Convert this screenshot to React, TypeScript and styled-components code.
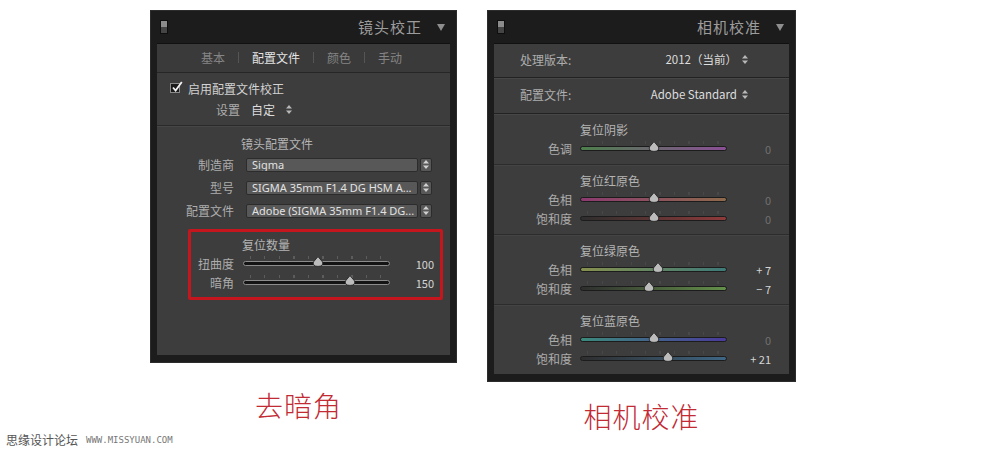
import React from "react"
import styled, { createGlobalStyle } from "styled-components"

// Global

const GlobalStyle = createGlobalStyle`
  html, body {
    margin: 0;
    padding: 0;
    background: #ffffff;
  }
  body {
    width: 1000px;
    height: 453px;
    overflow: hidden;
    position: relative;
    font-family: "Noto Sans CJK SC", "Noto Sans", sans-serif;
  }
`

// Page layout

const Page = styled.div`
  display: flex;
  align-items: flex-start;
  gap: 32px;
  padding: 11px 0 0 151px;
`

const Column = styled.div<{ $width: number }>`
  width: ${(p) => p.$width}px;
  display: flex;
  flex-direction: column;
  align-items: center;
`

const Caption = styled.div<{ $top: number; $shift: number }>`
  margin-top: ${(p) => p.$top}px;
  margin-right: ${(p) => p.$shift}px;
  font-family: "Noto Sans CJK SC", sans-serif;
  font-weight: 300;
  font-size: 28px;
  line-height: 1;
  letter-spacing: 1px;
  color: #c22a34;
`

const Watermark = styled.div`
  position: absolute;
  left: 6px;
  top: 431px;
  display: flex;
  align-items: center;
  gap: 8px;
  font-size: 12px;
  color: #555555;
`

const WatermarkUrl = styled.span`
  font-family: "DejaVu Sans Mono", monospace;
  font-size: 9px;
  color: #777777;
`

// Panel chrome

const Panel = styled.div<{ $height: number }>`
  width: 100%;
  height: ${(p) => p.$height}px;
  box-sizing: border-box;
  background: #1c1c1c;
  padding: 0 6px 7px;
  display: flex;
  flex-direction: column;
  box-shadow: 0 0 0 1px #2c2c2c;
`

const Header = styled.div`
  height: 32px;
  flex: none;
  display: flex;
  align-items: center;
  padding: 0 5px 0 3px;
`

const HeaderIcon = styled.span`
  width: 8px;
  height: 14px;
  box-sizing: border-box;
  border: 1px solid #0e0e0e;
  background: linear-gradient(#8c8c8c 0 50%, #454545 50% 100%);
`

const HeaderTitle = styled.span`
  margin-left: auto;
  padding-bottom: 2px;
  font-size: 15px;
  letter-spacing: 1px;
  color: #9c9c9c;
`

const HeaderArrow = styled.span`
  margin-left: 15px;
  width: 0;
  height: 0;
  border-left: 4px solid transparent;
  border-right: 4px solid transparent;
  border-top: 7px solid #8e8e8e;
`

const Body = styled.div`
  flex: 1;
  background: #3d3d3d;
  border-top: 1px solid #111111;
  display: flex;
  flex-direction: column;
  font-size: 12px;
  color: #adadad;
`

// Lens correction parts

const TabRow = styled.div`
  height: 29px;
  box-sizing: border-box;
  padding: 0 0 2px 44px;
  flex: none;
  display: flex;
  align-items: center;
  gap: 12px;
  background: #3a3a3a;
  border-bottom: 1px solid #262626;
`

const Tab = styled.span<{ $active?: boolean }>`
  color: ${(p) => (p.$active ? "#e4e4e4" : "#858585")};
`

const TabDivider = styled.span`
  width: 1px;
  height: 11px;
  margin: 0 1px;
  background: #555555;
`

const Section = styled.div<{ $pad: string }>`
  padding: ${(p) => p.$pad};
  border-bottom: 1px solid #2a2a2a;
  box-shadow: 0 1px 0 #464646;
`

const CheckRow = styled.div`
  height: 18px;
  display: flex;
  align-items: center;
  gap: 8px;
  padding-left: 13px;
  color: #d2d2d2;
`

const CheckBox = styled.span`
  position: relative;
  width: 10px;
  height: 10px;
  box-sizing: border-box;
  border: 1px solid #8a8a8a;
  background: #1a1a1a;
`

const CheckMark = styled.svg`
  position: absolute;
  left: 0;
  top: -3px;
  width: 12px;
  height: 12px;
`

const SettingRow = styled.div`
  height: 18px;
  margin-top: 3px;
  display: flex;
  align-items: center;
  padding-left: 59px;
  gap: 11px;
`

const SettingValue = styled.span`
  color: #dcdcdc;
`

const Updown = styled.svg`
  width: 6px;
  height: 9px;
`

const GroupTitle = styled.div<{ $indent: number }>`
  height: 18px;
  line-height: 17px;
  padding-left: ${(p) => p.$indent}px;
  color: #b4b4b4;
`

const FieldRow = styled.div`
  height: 23px;
  display: flex;
  align-items: center;
`

const FieldLabel = styled.span`
  width: 77px;
  text-align: right;
  margin-top: -1px;
`

const Select = styled.div`
  margin-left: 12px;
  width: 172px;
  height: 14px;
  box-sizing: border-box;
  padding: 0 5px;
  background: #585858;
  border: 1px solid #2c2c2c;
  border-radius: 2px;
  font-family: "Noto Sans", sans-serif;
  font-size: 11px;
  line-height: 12px;
  color: #e2e2e2;
  white-space: nowrap;
  overflow: hidden;
`

const Stepper = styled.div`
  margin-left: 2px;
  width: 12px;
  height: 14px;
  box-sizing: border-box;
  background: #585858;
  border: 1px solid #2c2c2c;
  border-radius: 2px;
  display: flex;
  align-items: center;
  justify-content: center;
`

const HighlightBox = styled.div`
  margin: 7px 0 0 31px;
  width: 255px;
  box-sizing: border-box;
  border: 3px solid #c4161c;
  border-radius: 2px;
  padding: 4px 6px 5px 0;
`

// Sliders

const SliderGrid = styled.div<{ $label: number; $gap: number }>`
  height: 19px;
  display: grid;
  grid-template-columns: ${(p) => p.$label}px 147px 1fr;
  column-gap: ${(p) => p.$gap}px;
  align-items: center;
`

const SliderLabel = styled.span`
  text-align: right;
  color: #acacac;
`

const SliderValue = styled.span<{ $dim?: boolean }>`
  text-align: right;
  font-size: 11px;
  color: ${(p) => (p.$dim ? "#707070" : "#d6d6d6")};
`

const Track = styled.div<{ $fill: string; $rim: string; $ticks: number }>`
  position: relative;
  height: 5px;
  box-sizing: border-box;
  border-radius: 3px;
  border: 1px solid ${(p) => p.$rim};
  background: ${(p) => p.$fill};

  &::before {
    content: "";
    position: absolute;
    left: 6px;
    right: 6px;
    top: -6px;
    height: 3px;
    background: repeating-linear-gradient(
      to right,
      rgba(255, 255, 255, ${(p) => p.$ticks}) 0 1px,
      transparent 1px 14.5px
    );
  }
`

const Thumb = styled.svg`
  position: absolute;
  top: -6px;
  width: 12px;
  height: 11px;
  margin-left: -6px;
`

// Camera calibration parts

const ProfileRow = styled.div<{ $height: number }>`
  height: ${(p) => p.$height}px;
  box-sizing: border-box;
  flex: none;
  display: flex;
  align-items: center;
  padding: 0 41px 3px 26px;
  border-bottom: 1px solid #222222;
  box-shadow: 0 1px 0 #474747;
`

const ProfileValue = styled.span`
  margin-left: auto;
  display: flex;
  align-items: center;
  gap: 5px;
  font-size: 11.5px;
  color: #dedede;
`

const CalSection = styled.div<{ $last?: boolean }>`
  padding: 7px 18px 6px 0;
  ${(p) => (p.$last ? "" : "border-bottom: 1px solid #2c2c2c; box-shadow: 0 1px 0 #444444;")}
`

// Small drawings

function UpDownIcon({ color = "#b8b8b8" }: { color?: string }) {
  return (
    <Updown viewBox="0 0 6 9">
      <path d="M3 0 L6 3.6 H0 Z M3 9 L0 5.4 H6 Z" fill={color} />
    </Updown>
  )
}

type SliderProps = {
  label: string
  value: string
  pos: number
  fill?: string
  rim?: string
  ticks?: number
  dim?: boolean
  labelWidth: number
  gap: number
}

function Slider({
  label,
  value,
  pos,
  fill = "#141414",
  rim = "#8c8c8c",
  ticks = 0.1,
  dim,
  labelWidth,
  gap,
}: SliderProps) {
  return (
    <SliderGrid $label={labelWidth} $gap={gap}>
      <SliderLabel>{label}</SliderLabel>
      <Track $fill={fill} $rim={rim} $ticks={ticks}>
        <Thumb viewBox="0 0 12 11" style={{ left: `${pos * 100}%` }}>
          <path
            d="M6 0.6 L10.6 6 Q11.6 10.4 6 10.4 Q0.4 10.4 1.4 6 Z"
            fill="#bcbcbc"
            stroke="#262626"
            strokeWidth="0.9"
          />
        </Thumb>
      </Track>
      <SliderValue $dim={dim}>{value}</SliderValue>
    </SliderGrid>
  )
}

// Data

const calibration = [
  {
    title: "复位阴影",
    rows: [
      { label: "色调", value: "0", pos: 0.5, fill: "linear-gradient(to right, #4d7f4c, #8a4f95)" },
    ],
  },
  {
    title: "复位红原色",
    rows: [
      { label: "色相", value: "0", pos: 0.5, fill: "linear-gradient(to right, #8c3a70, #8e6a4c)" },
      { label: "饱和度", value: "0", pos: 0.5, fill: "linear-gradient(to right, #2e2e2e, #8e3a3a)" },
    ],
  },
  {
    title: "复位绿原色",
    rows: [
      { label: "色相", value: "+ 7", pos: 0.53, fill: "linear-gradient(to right, #86904e, #3e7a78)" },
      { label: "饱和度", value: "− 7", pos: 0.47, fill: "linear-gradient(to right, #2e2e2e, #64904a)" },
    ],
  },
  {
    title: "复位蓝原色",
    rows: [
      { label: "色相", value: "0", pos: 0.5, fill: "linear-gradient(to right, #3b8a7c, #4a3a9c)" },
      { label: "饱和度", value: "+ 21", pos: 0.6, fill: "linear-gradient(to right, #2e2e2e, #3e6684)" },
    ],
  },
]

const lensFields = [
  { label: "制造商", value: "Sigma" },
  { label: "型号", value: "SIGMA 35mm F1.4 DG HSM A..." },
  { label: "配置文件", value: "Adobe (SIGMA 35mm F1.4 DG..." },
]

// Panels

function LensPanel() {
  return (
    <Panel $height={351}>
      <Header>
        <HeaderIcon />
        <HeaderTitle>镜头校正</HeaderTitle>
        <HeaderArrow />
      </Header>
      <Body>
        <TabRow>
          <Tab>基本</Tab>
          <TabDivider />
          <Tab $active>配置文件</Tab>
          <TabDivider />
          <Tab>颜色</Tab>
          <TabDivider />
          <Tab>手动</Tab>
        </TabRow>
        <Section $pad="6px 0 7px">
          <CheckRow>
            <CheckBox>
              <CheckMark viewBox="0 0 12 12">
                <path d="M2 6.5 L4.6 9.6 L10.8 1" fill="none" stroke="#f2f2f2" strokeWidth="1.8" />
              </CheckMark>
            </CheckBox>
            启用配置文件校正
          </CheckRow>
          <SettingRow>
            设置
            <SettingValue>自定</SettingValue>
            <UpDownIcon />
          </SettingRow>
        </Section>
        <div style={{ paddingTop: 9 }}>
          <GroupTitle $indent={84}>镜头配置文件</GroupTitle>
          {lensFields.map((f) => (
            <FieldRow key={f.label}>
              <FieldLabel>{f.label}</FieldLabel>
              <Select>{f.value}</Select>
              <Stepper>
                <UpDownIcon color="#d0d0d0" />
              </Stepper>
            </FieldRow>
          ))}
          <HighlightBox>
            <GroupTitle $indent={51}>复位数量</GroupTitle>
            <Slider label="扭曲度" value="100" pos={0.51} labelWidth={43} gap={9} ticks={0.16} />
            <Slider label="暗角" value="150" pos={0.73} labelWidth={43} gap={9} ticks={0.16} />
          </HighlightBox>
        </div>
      </Body>
    </Panel>
  )
}

function CalibrationPanel() {
  return (
    <Panel $height={370}>
      <Header>
        <HeaderIcon />
        <HeaderTitle>相机校准</HeaderTitle>
        <HeaderArrow />
      </Header>
      <Body>
        <ProfileRow $height={34}>
          处理版本:
          <ProfileValue>
            2012（当前）
            <UpDownIcon />
          </ProfileValue>
        </ProfileRow>
        <ProfileRow $height={36}>
          配置文件:
          <ProfileValue>
            Adobe Standard
            <UpDownIcon />
          </ProfileValue>
        </ProfileRow>
        {calibration.map((group, i) => (
          <CalSection key={group.title} $last={i === calibration.length - 1}>
            <GroupTitle $indent={86}>{group.title}</GroupTitle>
            {group.rows.map((r) => (
              <Slider
                key={r.label}
                label={r.label}
                value={r.value}
                pos={r.pos}
                fill={r.fill}
                rim="#1c1c1c"
                ticks={0.06}
                dim={r.value === "0"}
                labelWidth={78}
                gap={8}
              />
            ))}
          </CalSection>
        ))}
      </Body>
    </Panel>
  )
}

export default function App() {
  return (
    <>
      <GlobalStyle />
      <Page>
        <Column $width={305}>
          <LensPanel />
          <Caption $top={29} $shift={10}>
            去暗角
          </Caption>
        </Column>
        <Column $width={307}>
          <CalibrationPanel />
          <Caption $top={21} $shift={0}>
            相机校准
          </Caption>
        </Column>
      </Page>
      <Watermark>
        思缘设计论坛
        <WatermarkUrl>WWW.MISSYUAN.COM</WatermarkUrl>
      </Watermark>
    </>
  )
}
